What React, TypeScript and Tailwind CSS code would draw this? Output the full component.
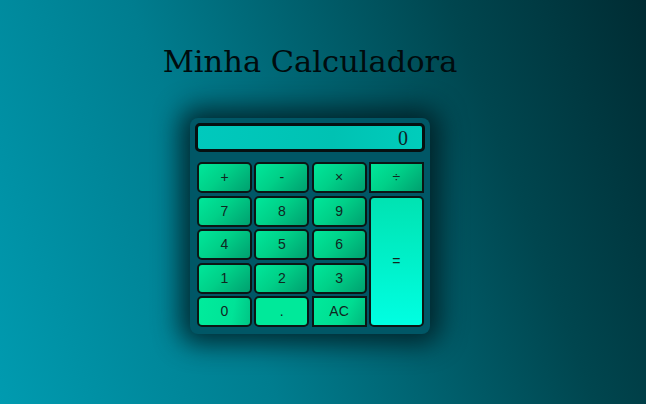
const keys: { label: string; cls: string }[] = [
  { label: "+", cls: "rounded-[5px]" },
  { label: "-", cls: "rounded-[5px]" },
  { label: "×", cls: "rounded-[5px]" },
  { label: "÷", cls: "rounded-none" },
  { label: "7", cls: "rounded-[5px]" },
  { label: "8", cls: "rounded-[5px]" },
  { label: "9", cls: "rounded-[5px]" },
  { label: "4", cls: "rounded-[5px]" },
  { label: "5", cls: "rounded-[5px]" },
  { label: "6", cls: "rounded-[5px]" },
  { label: "1", cls: "rounded-[5px]" },
  { label: "2", cls: "rounded-[5px]" },
  { label: "3", cls: "rounded-[5px]" },
];

const cols = ["col-start-1", "col-start-2", "col-start-3"];

function Key({ label, className }: { label: string; className: string }) {
  return (
    <button
      type="button"
      className={`flex items-center justify-center border-2 border-[#0b1514] text-[14px] text-[#10261f] ${className}`}
    >
      {label}
    </button>
  );
}

export default function App() {
  const green =
    "bg-[linear-gradient(135deg,#00e79a_0%,#00d088_45%,#00a06f_100%)]";

  return (
    <div className="flex h-[404px] w-[646px] flex-col items-center bg-[linear-gradient(70deg,#009bb0_0%,#007d8f_35%,#00464f_75%,#002c33_100%)] pr-[26px] font-['Liberation_Sans',Arial,sans-serif]">
      <h1 className="mt-[42px] font-['DejaVu_Serif','Liberation_Serif',serif] text-[30.5px] leading-[40px] text-[#010c0e]">
        Minha Calculadora
      </h1>

      <div className="mt-[36px] flex w-[240px] flex-col rounded-[8px] bg-[#005766] p-[5px] shadow-[0_0_26px_10px_rgba(0,22,28,0.8)]">
        <div className="flex h-[29px] items-center justify-end rounded-[5px] border-[3px] border-[#061011] bg-[linear-gradient(100deg,#00c9bd_0%,#00c2b3_60%,#00cdbc_100%)] pr-[14px] font-['Liberation_Serif',serif] text-[20px] text-[#0b2626]">
          0
        </div>

        <div className="mx-[2px] mb-[2px] mt-[10px] grid grid-cols-[repeat(4,55px)] grid-rows-[repeat(5,31px)] gap-x-[2.3px] gap-y-[2.5px]">
          {keys.slice(0, 4).map((k) => (
            <Key key={k.label} label={k.label} className={`${k.cls} ${green}`} />
          ))}
          {keys.slice(4).map((k, i) => (
            <Key
              key={k.label}
              label={k.label}
              className={`${k.cls} ${green} ${cols[i % 3]}`}
            />
          ))}
          <Key
            label="="
            className="col-start-4 row-span-4 row-start-2 rounded-[5px] bg-[linear-gradient(180deg,#00e3b2_0%,#00f2cc_55%,#00ffe2_100%)]"
          />
          <Key
            label="0"
            className="col-start-1 row-start-5 rounded-[5px] bg-[linear-gradient(100deg,#00ec9c_0%,#00e397_65%,#00c585_100%)]"
          />
          <Key
            label="."
            className="col-start-2 row-start-5 rounded-[5px] bg-[#00e99a]"
          />
          <Key
            label="AC"
            className="col-start-3 row-start-5 rounded-none bg-[linear-gradient(120deg,#00ea9b_0%,#00dd92_60%,#00b77c_100%)]"
          />
        </div>
      </div>
    </div>
  );
}
